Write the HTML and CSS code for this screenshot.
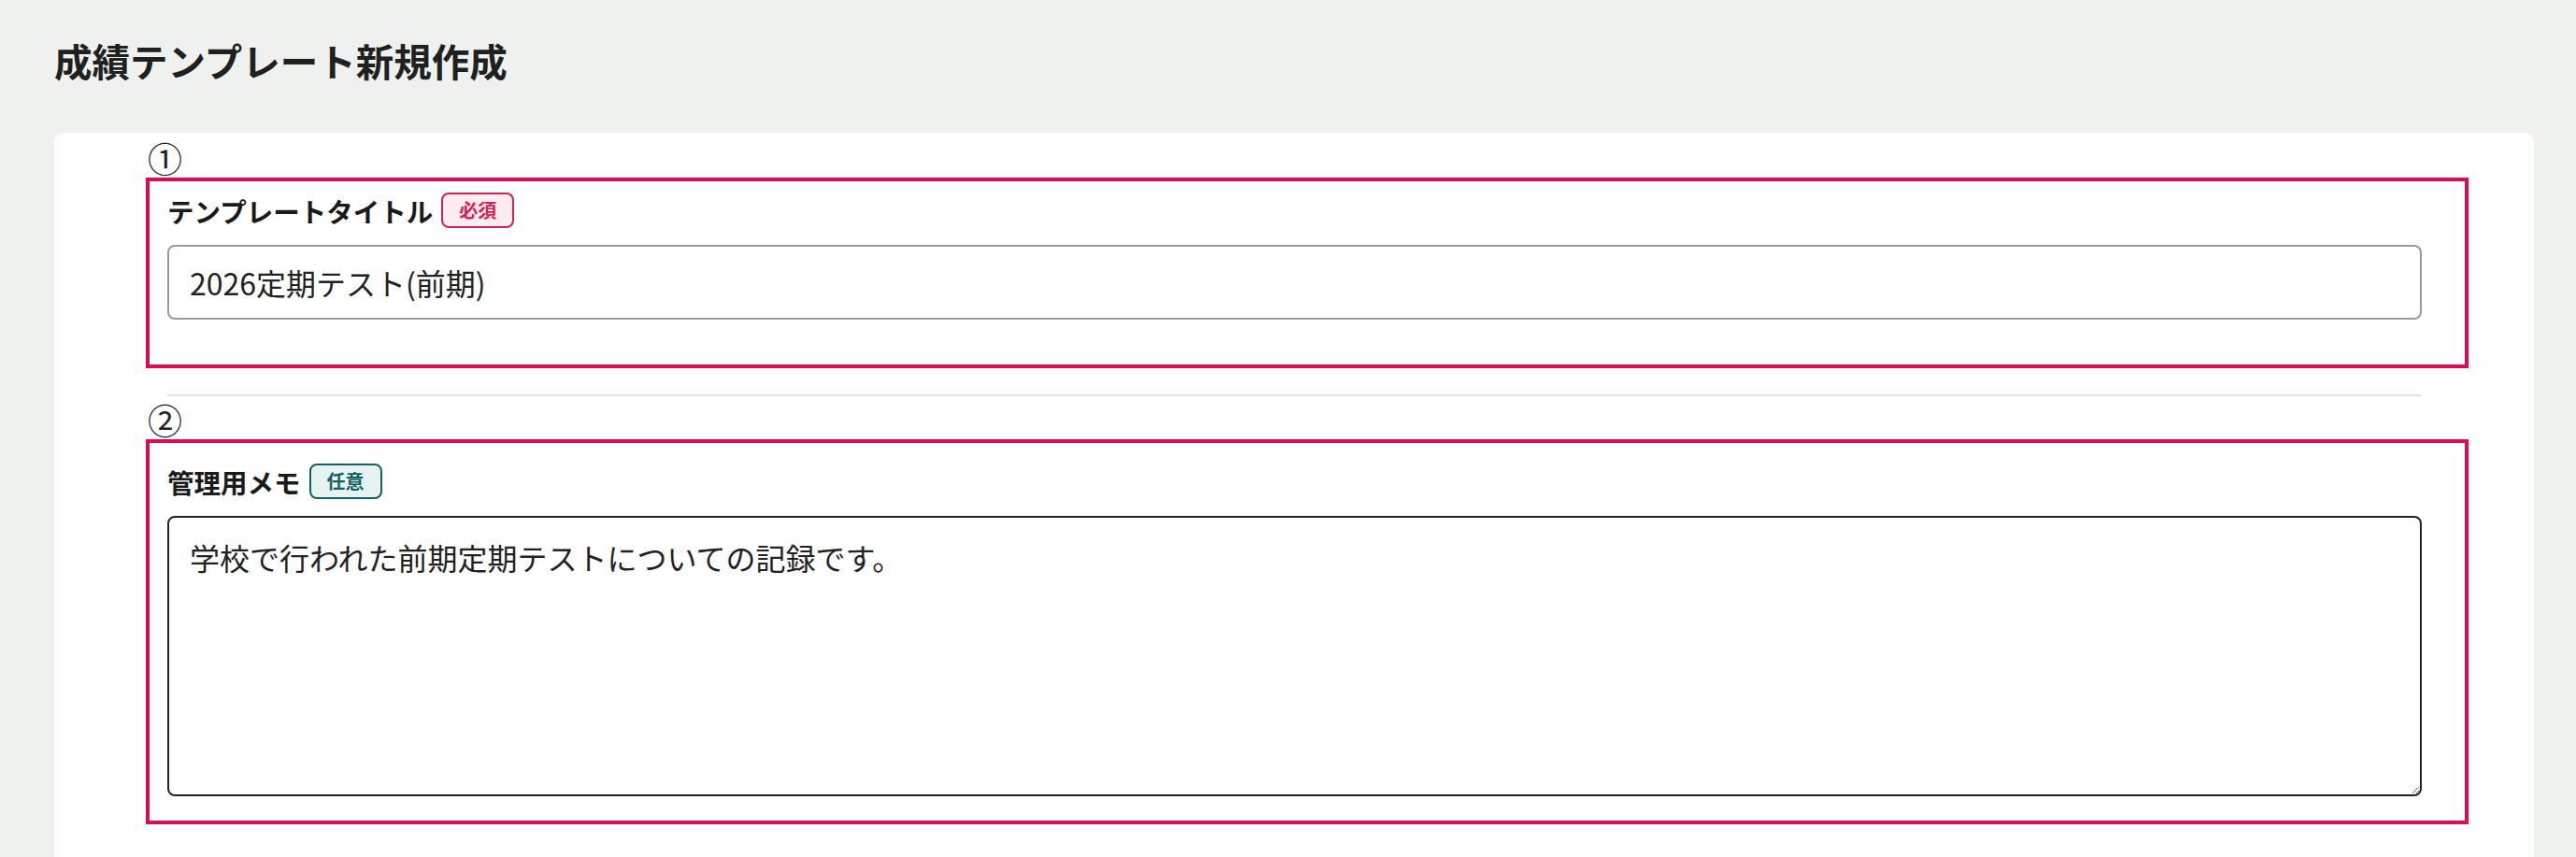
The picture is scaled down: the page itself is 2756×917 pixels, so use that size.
FILE: index.html
```html
<!DOCTYPE html>
<html lang="ja">
<head>
<meta charset="utf-8">
<title>成績テンプレート新規作成</title>
<link rel="stylesheet" href="styles.css">
</head>
<body>
<div class="page">
  <h1 class="page-title">成績テンプレート新規作成</h1>
  <section class="card">
    <div class="anno-num">①</div>
    <div class="anno-box anno-box-1">
      <div class="field">
        <div class="label-row">
          <span class="label">テンプレートタイトル</span>
          <span class="badge badge-required">必須</span>
        </div>
        <input class="text-input" type="text" value="2026定期テスト(前期)">
      </div>
    </div>
    <hr class="divider">
    <div class="anno-num">②</div>
    <div class="anno-box anno-box-2">
      <div class="field">
        <div class="label-row">
          <span class="label">管理用メモ</span>
          <span class="badge badge-optional">任意</span>
        </div>
        <textarea class="text-area">学校で行われた前期定期テストについての記録です。</textarea>
      </div>
    </div>
  </section>
</div>
</body>
</html>
```
FILE: styles.css
```css
* { box-sizing: border-box; }
html, body {
  margin: 0;
  padding: 0;
  background: #eff1ef;
  font-family: "Noto Sans CJK JP", "Noto Sans", sans-serif;
  color: #222;
}
.page {
  padding: 36px 45px 0 58px;
  height: 917px;
  overflow: hidden;
}
.page-title {
  margin: 0 0 49px 0;
  font-size: 40.5px;
  line-height: 57px;
  font-weight: 700;
  color: #1f211f;
}
.card {
  background: #fff;
  border-radius: 10px 10px 0 0;
  padding: 6px 120px 60px 121px;
  min-height: 800px;
}
.anno-num {
  margin-left: -21px;
  font-size: 37px;
  line-height: 42px;
  height: 42px;
  font-weight: 400;
  color: #222;
}
.anno-box {
  border: 4px solid #dc0a52;
  margin: 0 -50px 0 -23px;
  padding: 12px 46px 48px 19px;
}
.anno-box-2 {
  padding-top: 22px;
  padding-bottom: 26px;
}
.field {
  display: flex;
  flex-direction: column;
  gap: 18px;
}
.label-row {
  display: flex;
  align-items: center;
  gap: 9px;
  height: 38px;
}
.label {
  font-size: 28.5px;
  font-weight: 700;
  color: #1a1a1a;
}
.badge {
  display: inline-flex;
  align-items: center;
  justify-content: center;
  height: 38px;
  padding: 0 17px;
  border: 2px solid;
  border-radius: 8px;
  font-size: 20px;
  font-weight: 700;
  line-height: 1;
}
.badge-required {
  color: #d42352;
  border-color: #d42352;
  background: #fdecf0;
}
.badge-optional {
  color: #13625f;
  border-color: #13625f;
  background: #e7f3f0;
}
.text-input {
  display: block;
  width: 100%;
  height: 80px;
  border: 2px solid #9a9a9a;
  border-radius: 8px;
  padding: 0 22px;
  font-family: "Noto Sans CJK JP", "Noto Sans", sans-serif;
  font-size: 32px;
  color: #222;
  background: #fff;
  outline: none;
}
.text-area {
  display: block;
  width: 100%;
  height: 300px;
  border: 2px solid #222;
  border-radius: 8px;
  padding: 18px 22px;
  font-family: "Noto Sans CJK JP", "Noto Sans", sans-serif;
  font-size: 32px;
  line-height: 1.5;
  color: #222;
  background: #fff;
  resize: vertical;
  outline: none;
}
.divider {
  border: 0;
  border-top: 2px solid #e2e2e2;
  margin: 28px 0 4px 0;
  height: 0;
}
```
